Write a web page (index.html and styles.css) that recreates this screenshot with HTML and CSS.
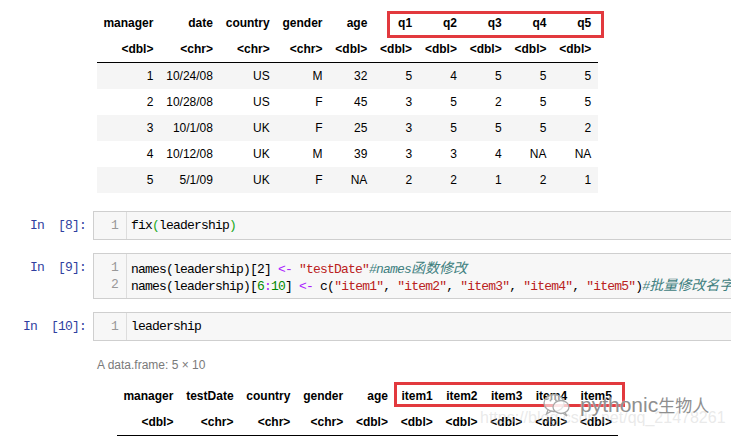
FILE: index.html
```html
<!DOCTYPE html>
<html lang="en">
<head>
<meta charset="utf-8">
<title>leadership</title>
<link rel="stylesheet" href="styles.css">
</head>
<body>
<div class="page">
  <div class="output output-first">
    <div class="frame">
      <table class="df">
        <thead>
          <tr><th>manager</th><th>date</th><th>country</th><th>gender</th><th>age</th><th>q1</th><th>q2</th><th>q3</th><th>q4</th><th>q5</th></tr>
          <tr class="types"><th>&lt;dbl&gt;</th><th>&lt;chr&gt;</th><th>&lt;chr&gt;</th><th>&lt;chr&gt;</th><th>&lt;dbl&gt;</th><th>&lt;dbl&gt;</th><th>&lt;dbl&gt;</th><th>&lt;dbl&gt;</th><th>&lt;dbl&gt;</th><th>&lt;dbl&gt;</th></tr>
        </thead>
        <tbody>
          <tr><td>1</td><td>10/24/08</td><td>US</td><td>M</td><td>32</td><td>5</td><td>4</td><td>5</td><td>5</td><td>5</td></tr>
          <tr><td>2</td><td>10/28/08</td><td>US</td><td>F</td><td>45</td><td>3</td><td>5</td><td>2</td><td>5</td><td>5</td></tr>
          <tr><td>3</td><td>10/1/08</td><td>UK</td><td>F</td><td>25</td><td>3</td><td>5</td><td>5</td><td>5</td><td>2</td></tr>
          <tr><td>4</td><td>10/12/08</td><td>UK</td><td>M</td><td>39</td><td>3</td><td>3</td><td>4</td><td>NA</td><td>NA</td></tr>
          <tr><td>5</td><td>5/1/09</td><td>UK</td><td>F</td><td>NA</td><td>2</td><td>2</td><td>1</td><td>2</td><td>1</td></tr>
        </tbody>
      </table>
      <div class="mark mark-q"></div>
    </div>
  </div>

  <div class="cell cell-first">
    <div class="prompt">In&nbsp;&nbsp;[8]:</div>
    <div class="input">
      <div class="gutter"><div>1</div></div>
      <div class="code"><div class="line">fix<span class="br">(</span>leadership<span class="br">)</span></div></div>
    </div>
  </div>

  <div class="cell">
    <div class="prompt">In&nbsp;&nbsp;[9]:</div>
    <div class="input">
      <div class="gutter"><div>1</div><div>2</div></div>
      <div class="code">
        <div class="line">names(leadership)[2] <span class="op">&lt;-</span> <span class="str">"testDate"</span><span class="cm">#names<span class="cjk">函数修改</span></span></div>
        <div class="line">names(leadership)[<span class="num">6</span><span class="op">:</span><span class="num">10</span>] <span class="op">&lt;-</span> c(<span class="str">"item1"</span>, <span class="str">"item2"</span>, <span class="str">"item3"</span>, <span class="str">"item4"</span>, <span class="str">"item5"</span>)<span class="cm">#<span class="cjk">批量修改名字</span></span></div>
      </div>
    </div>
  </div>

  <div class="cell">
    <div class="prompt">In&nbsp;&nbsp;[10]:</div>
    <div class="input">
      <div class="gutter"><div>1</div></div>
      <div class="code"><div class="line">leadership</div></div>
    </div>
  </div>

  <div class="output output-second">
    <div class="caption">A data.frame: 5 × 10</div>
    <div class="frame frame-shift">
      <table class="df">
        <thead>
          <tr><th>manager</th><th>testDate</th><th>country</th><th>gender</th><th>age</th><th>item1</th><th>item2</th><th>item3</th><th>item4</th><th>item5</th></tr>
          <tr class="types"><th>&lt;dbl&gt;</th><th>&lt;chr&gt;</th><th>&lt;chr&gt;</th><th>&lt;chr&gt;</th><th>&lt;dbl&gt;</th><th>&lt;dbl&gt;</th><th>&lt;dbl&gt;</th><th>&lt;dbl&gt;</th><th>&lt;dbl&gt;</th><th>&lt;dbl&gt;</th></tr>
        </thead>
      </table>
      <div class="mark mark-item"></div>
    </div>
  </div>

  <div class="watermark">
    <div class="wm-url">https://blog.csdn.net/qq_21478261</div>
    <div class="wm-brand">
      <svg class="wm-icon" width="30" height="26" viewBox="0 0 30 26">
        <ellipse cx="12" cy="11" rx="10" ry="8.5" fill="rgba(255,255,255,0.6)" stroke="#a8a8a8" stroke-width="1.3"/>
        <path d="M6 18 L4.5 22 L9.5 19" fill="none" stroke="#a8a8a8" stroke-width="1.3"/>
        <ellipse cx="19" cy="15" rx="8" ry="6.5" fill="rgba(255,255,255,0.7)" stroke="#a8a8a8" stroke-width="1.3"/>
        <path d="M23 20.5 L25 24 L21 21.3" fill="none" stroke="#a8a8a8" stroke-width="1.3"/>
        <circle cx="8.5" cy="8.5" r="1" fill="#a8a8a8"/>
        <circle cx="14" cy="8.5" r="1" fill="#a8a8a8"/>
      </svg>
      <span class="wm-text">pythonic<span class="wm-cjk">生物人</span></span>
    </div>
  </div>
</div>
</body>
</html>
```

FILE: styles.css
```css
html, body {
  margin: 0;
  padding: 0;
  overflow: hidden;
  background: #ffffff;
}

.page {
  position: relative;
  width: 780px;
  height: 437px;
  overflow: hidden;
  font-family: "Liberation Sans", Arial, sans-serif;
  color: #000;
}

/* ---------- outputs / data frames ---------- */
.output {
  padding-left: 97px;
}

.output-first {
  padding-top: 10px;
}

.frame {
  position: relative;
  display: inline-block;
  vertical-align: top;
}

.frame-shift {
  margin-left: 20px;
  margin-top: 11px;
}

.df {
  border-collapse: collapse;
  border-spacing: 0;
  font-size: 12px;
  line-height: 14px;
}

.df th,
.df td {
  padding: 6px 6.4px;
  text-align: right;
  vertical-align: middle;
  white-space: nowrap;
}

.df th {
  font-weight: bold;
}

.df .types th {
  border-bottom: 1px solid #000;
}

.df tbody tr:nth-child(odd) {
  background: #f5f5f5;
}

.mark {
  position: absolute;
  border: 3px solid #e2393e;
  box-sizing: border-box;
}

.mark-q {
  left: 290px;
  top: 1px;
  width: 217px;
  height: 27px;
}

.mark-item {
  left: 277px;
  top: -1px;
  width: 231px;
  height: 25px;
}

.caption {
  margin-top: 17px;
  font-size: 12px;
  line-height: 14px;
  color: #7a7a7a;
}

/* ---------- code cells ---------- */
.cell {
  display: flex;
  align-items: flex-start;
  margin-top: 13px;
}

.cell-first {
  margin-top: 18px;
}

.prompt {
  width: 86px;
  padding-right: 7px;
  padding-top: 6px;
  box-sizing: content-box;
  text-align: right;
  font-family: "Liberation Mono", "DejaVu Sans Mono", monospace;
  font-size: 13px;
  letter-spacing: -0.8px;
  line-height: 17px;
  color: #303f9f;
  white-space: nowrap;
}

.input {
  flex: 1;
  display: flex;
  border: 1px solid #cfcfcf;
  background: #f7f7f7;
  overflow: hidden;
  font-family: "Liberation Mono", "DejaVu Sans Mono", monospace;
  font-size: 13px;
  letter-spacing: -0.8px;
  line-height: 17px;
}

.gutter {
  width: 24px;
  padding: 5px 8px 5px 0;
  border-right: 1px solid #dddddd;
  text-align: right;
  color: #999999;
  flex: none;
}

.code {
  padding: 5px 0 5px 4px;
  color: #000;
}

.line {
  white-space: pre;
  height: 17px;
}

.br { color: #22aa22; }
.op { color: #aa22ff; }
.str { color: #ba2121; }
.num { color: #008800; }
.cm { color: #408080; font-style: italic; }

.cjk {
  font-family: "Noto Sans CJK SC", sans-serif;
  font-size: 14px;
  line-height: 17px;
  letter-spacing: 0;
}

/* ---------- watermark overlay ---------- */
.watermark {
  position: absolute;
  left: 480px;
  top: 390px;
  width: 250px;
  height: 47px;
  pointer-events: none;
}

.wm-url {
  position: absolute;
  left: 0;
  top: 19px;
  font-family: "Liberation Sans", Arial, sans-serif;
  font-size: 16px;
  line-height: 18px;
  color: rgba(200, 200, 200, 0.4);
  white-space: nowrap;
}

.wm-brand {
  position: absolute;
  left: 62px;
  top: 2px;
  display: flex;
  align-items: center;
  gap: 8px;
}

.wm-text {
  font-family: "Liberation Sans", Arial, sans-serif;
  font-size: 21px;
  line-height: 22px;
  color: #8f8f8f;
  white-space: nowrap;
  text-shadow: 0 0 2px rgba(255, 255, 255, 0.9);
}

.wm-cjk {
  font-family: "Noto Sans CJK SC", sans-serif;
  font-size: 17px;
}
```
